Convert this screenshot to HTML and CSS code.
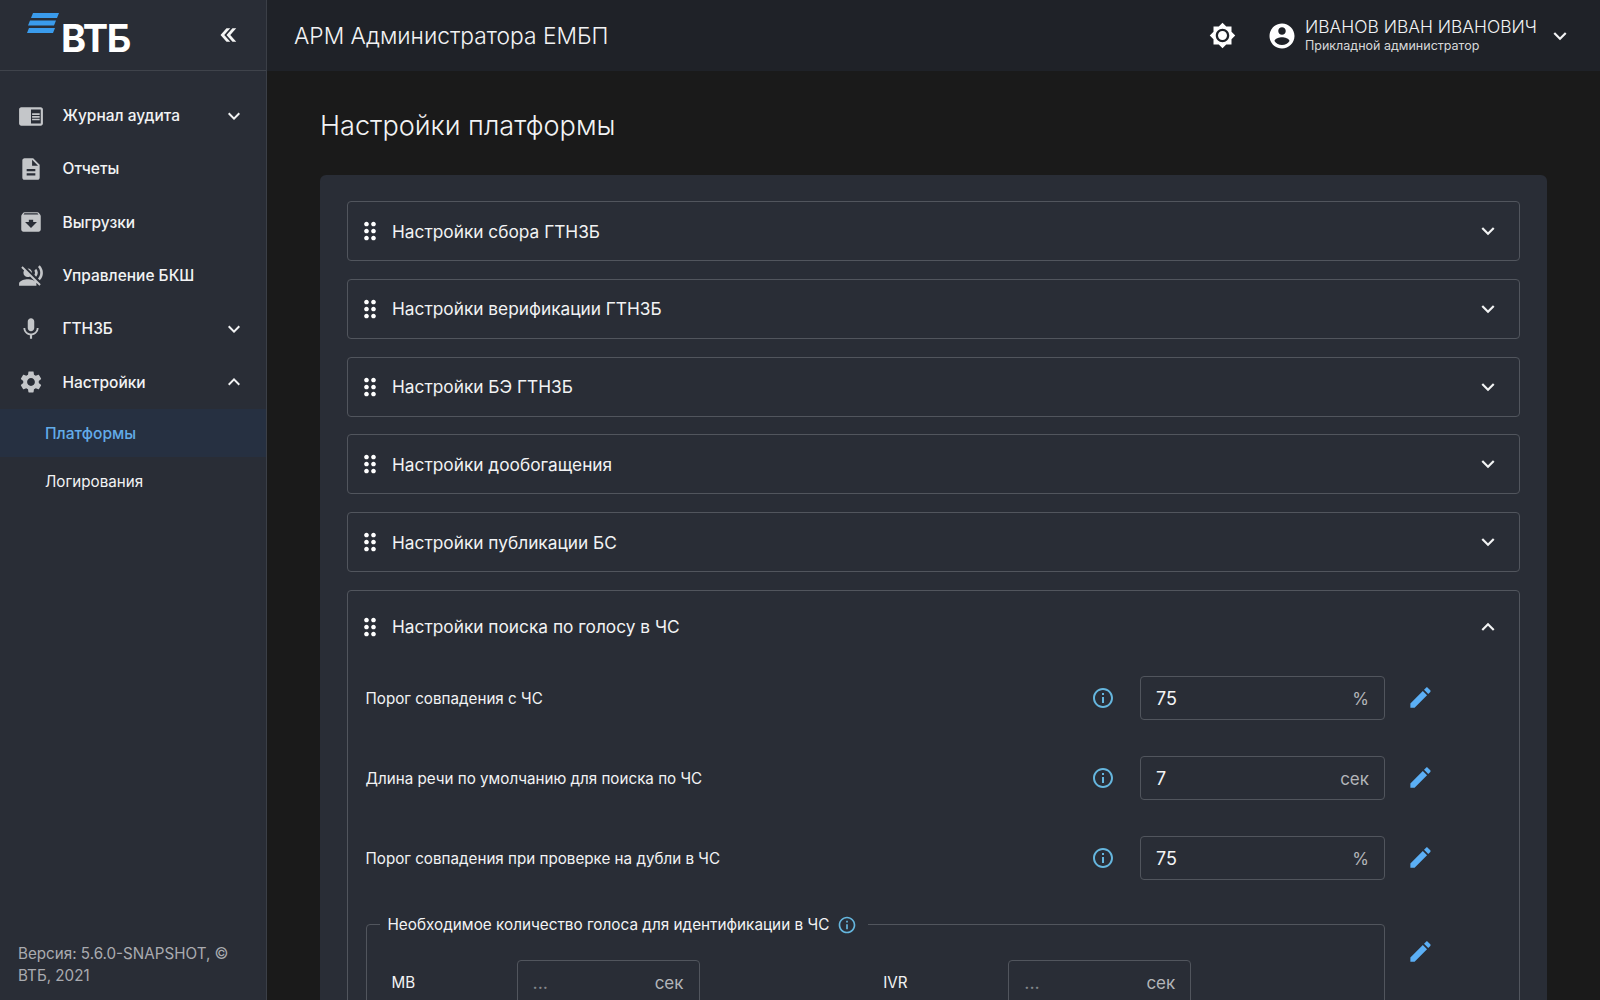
FILE: index.html
```html
<!DOCTYPE html>
<html lang="ru">
<head>
<meta charset="UTF-8">
<meta name="viewport" content="width=device-width, initial-scale=1.0">
<title>Настройки платформы</title>
<link rel="stylesheet" href="styles.css">
</head>
<body>

<svg class="sprite" xmlns="http://www.w3.org/2000/svg">
    <symbol id="i-journal" viewBox="0 0 24 24"><path d="M13 12h7v1.5h-7zm0-2.5h7V11h-7zm0 5h7V16h-7zM21 4H3c-1.1 0-2 .9-2 2v13c0 1.1.9 2 2 2h18c1.1 0 2-.9 2-2V6c0-1.1-.9-2-2-2zm0 15h-9V6h9v13z"/></symbol>
    <symbol id="i-report" viewBox="0 0 24 24"><path d="M14 2H6c-1.1 0-1.99.9-1.99 2L4 20c0 1.1.89 2 1.99 2H18c1.1 0 2-.9 2-2V8l-6-6zm2 16H8v-2h8v2zm0-4H8v-2h8v2zm-3-5V3.5L18.5 9H13z"/></symbol>
    <symbol id="i-archive" viewBox="0 0 24 24"><path d="M20.54 5.23l-1.39-1.68C18.88 3.21 18.47 3 18 3H6c-.47 0-.88.21-1.16.55L3.46 5.23C3.17 5.57 3 6.02 3 6.5V19c0 1.1.9 2 2 2h14c1.1 0 2-.9 2-2V6.5c0-.48-.17-.93-.46-1.27zM12 17.5L6.5 12H10v-2h4v2h3.5L12 17.5zM5.12 5l.81-1h12l.94 1H5.12z"/></symbol>
    <symbol id="i-voice-off" viewBox="0 0 24 24"><path d="M12.99 9.18c0-.06.01-.12.01-.18 0-2.21-1.79-4-4-4-.06 0-.12.01-.18.01l4.17 4.17zm-6.1-3.56L4.27 3 3 4.27l2.62 2.62C5.23 7.5 5 8.22 5 9c0 2.21 1.79 4 4 4 .78 0 1.5-.23 2.11-.62L19.73 21 21 19.73l-8.62-8.62-5.49-5.49zM9 15c-2.67 0-8 1.34-8 4v2h16v-2c0-2.66-5.33-4-8-4zm7.76-9.64l-1.68 1.69c.84 1.18.84 2.71 0 3.89l1.68 1.69c2.02-2.02 2.02-5.07 0-7.27zM20.07 2l-1.63 1.63c2.77 3.02 2.77 7.56 0 10.74L20.07 16c3.9-3.89 3.91-9.95 0-14z"/></symbol>
    <symbol id="i-mic" viewBox="0 0 24 24"><path d="M12 14c1.66 0 2.99-1.34 2.99-3L15 5c0-1.66-1.34-3-3-3S9 3.34 9 5v6c0 1.66 1.34 3 3 3zm5.3-3c0 3-2.54 5.1-5.3 5.1S6.7 14 6.7 11H5c0 3.41 2.72 6.23 6 6.72V21h2v-3.28c3.28-.48 6-3.3 6-6.72h-1.7z"/></symbol>
    <symbol id="i-settings" viewBox="0 0 24 24"><path d="M19.14 12.94c.04-.3.06-.61.06-.94 0-.32-.02-.64-.07-.94l2.03-1.58c.18-.14.23-.41.12-.61l-1.92-3.32c-.12-.22-.37-.29-.59-.22l-2.39.96c-.5-.38-1.03-.7-1.62-.94l-.36-2.54c-.04-.24-.24-.41-.48-.41h-3.84c-.24 0-.43.17-.47.41l-.36 2.54c-.59.24-1.13.57-1.62.94l-2.39-.96c-.22-.08-.47 0-.59.22L2.74 8.87c-.12.21-.08.47.12.61l2.03 1.58c-.05.3-.09.63-.09.94s.02.64.07.94l-2.03 1.58c-.18.14-.23.41-.12.61l1.92 3.32c.12.22.37.29.59.22l2.39-.96c.5.38 1.03.7 1.62.94l.36 2.54c.05.24.24.41.48.41h3.84c.24 0 .44-.17.47-.41l.36-2.54c.59-.24 1.13-.56 1.62-.94l2.39.96c.22.08.47 0 .59-.22l1.92-3.32c.12-.22.07-.47-.12-.61l-2.01-1.58zM12 15.6c-1.98 0-3.6-1.62-3.6-3.6s1.62-3.6 3.6-3.6 3.6 1.62 3.6 3.6-1.62 3.6-3.6 3.6z"/></symbol>
    <symbol id="i-theme" viewBox="0 0 24 24"><path d="M20 8.69V4h-4.69L12 .69 8.69 4H4v4.69L.69 12 4 15.31V20h4.69L12 23.31 15.31 20H20v-4.69L23.31 12 20 8.69zM12 18c-3.31 0-6-2.69-6-6s2.69-6 6-6 6 2.69 6 6-2.69 6-6 6zm0-10c-2.21 0-4 1.79-4 4s1.79 4 4 4 4-1.79 4-4-1.79-4-4-4z"/></symbol>
    <symbol id="i-account" viewBox="0 0 24 24"><path d="M12 2C6.48 2 2 6.48 2 12s4.48 10 10 10 10-4.48 10-10S17.52 2 12 2zm0 3c1.66 0 3 1.34 3 3s-1.34 3-3 3-3-1.34-3-3 1.34-3 3-3zm0 14.2c-2.5 0-4.71-1.28-6-3.22.03-1.99 4-3.08 6-3.08 1.99 0 5.97 1.09 6 3.08-1.29 1.94-3.5 3.22-6 3.22z"/></symbol>
    <symbol id="i-drag" viewBox="0 0 24 24"><path d="M11 18c0 1.1-.9 2-2 2s-2-.9-2-2 .9-2 2-2 2 .9 2 2zm-2-8c-1.1 0-2 .9-2 2s.9 2 2 2 2-.9 2-2-.9-2-2-2zm0-6c-1.1 0-2 .9-2 2s.9 2 2 2 2-.9 2-2-.9-2-2-2zm6 4c1.1 0 2-.9 2-2s-.9-2-2-2-2 .9-2 2 .9 2 2 2zm0 2c-1.1 0-2 .9-2 2s.9 2 2 2 2-.9 2-2-.9-2-2-2zm0 6c-1.1 0-2 .9-2 2s.9 2 2 2 2-.9 2-2-.9-2-2-2z"/></symbol>
    <symbol id="i-edit" viewBox="0 0 24 24"><path d="M3 17.25V21h3.75L17.81 9.94l-3.75-3.75L3 17.25zM20.71 7.04c.39-.39.39-1.02 0-1.41l-2.34-2.34c-.39-.39-1.02-.39-1.41 0l-1.83 1.83 3.75 3.75 1.83-1.83z"/></symbol>
    <symbol id="i-info" viewBox="0 0 24 24"><path d="M11 7h2v2h-2zm0 4h2v6h-2zm1-9C6.48 2 2 6.48 2 12s4.48 10 10 10 10-4.48 10-10S17.52 2 12 2zm0 18c-4.41 0-8-3.59-8-8s3.59-8 8-8 8 3.59 8 8-3.59 8-8 8z"/></symbol>
    <symbol id="i-down" viewBox="0 0 24 24"><path d="M16.59 8.59L12 13.17 7.41 8.59 6 10l6 6 6-6z"/></symbol>
    <symbol id="i-up" viewBox="0 0 24 24"><path d="M12 8l-6 6 1.41 1.41L12 10.83l4.59 4.58L18 14z"/></symbol>
    <symbol id="i-collapse" viewBox="0 0 24 24"><path d="M10 3L2 12l8 9h5l-8-9 8-9z"/><path d="M18 3l-8 9 8 9h5l-8-9 8-9z"/></symbol>
</svg>

<div class="app">
    <aside class="sidebar">
        <div class="logo-bar">
            <div class="logo">
                <svg class="logo-stripes" viewBox="0 0 32 20"><path d="M6 0h26l-2 5H4zM3 7.500h26l-2 5H1zM2 15h26l-2 5H0z" fill="#3a9bec"/></svg>
                <span class="logo-text">ВТБ</span>
            </div>
            <svg class="icon collapse-btn"><use href="#i-collapse"/></svg>
        </div>
        <nav class="nav">
            <a class="nav-item"><svg class="icon nav-icon"><use href="#i-journal"/></svg><span>Журнал аудита</span><svg class="icon nav-arrow"><use href="#i-down"/></svg></a>
            <a class="nav-item"><svg class="icon nav-icon"><use href="#i-report"/></svg><span>Отчеты</span></a>
            <a class="nav-item"><svg class="icon nav-icon"><use href="#i-archive"/></svg><span>Выгрузки</span></a>
            <a class="nav-item"><svg class="icon nav-icon"><use href="#i-voice-off"/></svg><span>Управление БКШ</span></a>
            <a class="nav-item"><svg class="icon nav-icon"><use href="#i-mic"/></svg><span>ГТНЗБ</span><svg class="icon nav-arrow"><use href="#i-down"/></svg></a>
            <a class="nav-item"><svg class="icon nav-icon"><use href="#i-settings"/></svg><span>Настройки</span><svg class="icon nav-arrow"><use href="#i-up"/></svg></a>
            <a class="nav-sub active">Платформы</a>
            <a class="nav-sub">Логирования</a>
        </nav>
        <div class="version">Версия: 5.6.0-SNAPSHOT, © ВТБ, 2021</div>
    </aside>

    <div class="page">
        <header class="topbar">
            <div class="app-name">АРМ Администратора ЕМБП</div>
            <svg class="icon theme-btn"><use href="#i-theme"/></svg>
            <svg class="icon account-icon"><use href="#i-account"/></svg>
            <div class="user">
                <div class="user-name">ИВАНОВ ИВАН ИВАНОВИЧ</div>
                <div class="user-role">Прикладной администратор</div>
            </div>
            <svg class="icon user-arrow"><use href="#i-down"/></svg>
        </header>

        <main class="content">
            <h1 class="title">Настройки платформы</h1>
            <section class="card">
                <div class="acc">
                    <div class="acc-head"><svg class="icon drag"><use href="#i-drag"/></svg><span>Настройки сбора ГТНЗБ</span><svg class="icon acc-arrow"><use href="#i-down"/></svg></div>
                </div>
                <div class="acc">
                    <div class="acc-head"><svg class="icon drag"><use href="#i-drag"/></svg><span>Настройки верификации ГТНЗБ</span><svg class="icon acc-arrow"><use href="#i-down"/></svg></div>
                </div>
                <div class="acc">
                    <div class="acc-head"><svg class="icon drag"><use href="#i-drag"/></svg><span>Настройки БЭ ГТНЗБ</span><svg class="icon acc-arrow"><use href="#i-down"/></svg></div>
                </div>
                <div class="acc">
                    <div class="acc-head"><svg class="icon drag"><use href="#i-drag"/></svg><span>Настройки дообогащения</span><svg class="icon acc-arrow"><use href="#i-down"/></svg></div>
                </div>
                <div class="acc">
                    <div class="acc-head"><svg class="icon drag"><use href="#i-drag"/></svg><span>Настройки публикации БС</span><svg class="icon acc-arrow"><use href="#i-down"/></svg></div>
                </div>
                <div class="acc open">
                    <div class="acc-head"><svg class="icon drag"><use href="#i-drag"/></svg><span>Настройки поиска по голосу в ЧС</span><svg class="icon acc-arrow"><use href="#i-up"/></svg></div>
                    <div class="acc-body">
                        <div class="row">
                            <div class="row-label">Порог совпадения с ЧС</div>
                            <svg class="icon info"><use href="#i-info"/></svg>
                            <div class="field"><span class="value">75</span><span class="unit">%</span></div>
                            <svg class="icon edit"><use href="#i-edit"/></svg>
                        </div>
                        <div class="row">
                            <div class="row-label">Длина речи по умолчанию для поиска по ЧС</div>
                            <svg class="icon info"><use href="#i-info"/></svg>
                            <div class="field"><span class="value">7</span><span class="unit">сек</span></div>
                            <svg class="icon edit"><use href="#i-edit"/></svg>
                        </div>
                        <div class="row">
                            <div class="row-label">Порог совпадения при проверке на дубли в ЧС</div>
                            <svg class="icon info"><use href="#i-info"/></svg>
                            <div class="field"><span class="value">75</span><span class="unit">%</span></div>
                            <svg class="icon edit"><use href="#i-edit"/></svg>
                        </div>
                        <div class="row row-group">
                            <fieldset class="group">
                                <legend class="group-title">Необходимое количество голоса для идентификации в ЧС<svg class="icon info-small"><use href="#i-info"/></svg></legend>
                                <div class="group-cols">
                                    <div class="group-item">
                                        <div class="group-label">МВ</div>
                                        <div class="field field-small"><span class="placeholder">...</span><span class="unit">сек</span></div>
                                    </div>
                                    <div class="group-item">
                                        <div class="group-label">IVR</div>
                                        <div class="field field-small"><span class="placeholder">...</span><span class="unit">сек</span></div>
                                    </div>
                                </div>
                            </fieldset>
                            <svg class="icon edit edit-group"><use href="#i-edit"/></svg>
                        </div>
                    </div>
                </div>
            </section>
        </main>
    </div>
</div>

</body>
</html>
```

FILE: styles.css
```css
html, body {
    margin: 0;
    padding: 0;
    height: 100%;
    overflow: hidden;
}

body {
    font-family: Inter, "Noto Sans", sans-serif;
    background-color: #1a1a1a;
    color: #f2f3f4;
}

.sprite {
    display: none;
}

.icon {
    display: block;
    width: 24px;
    height: 24px;
    flex: none;
    fill: currentColor;
}

.app {
    display: flex;
    height: 1000px;
}

/* sidebar */
.sidebar {
    width: 266px;
    flex: none;
    display: flex;
    flex-direction: column;
    background-color: #292d36;
    border-right: 1px solid #3b3f47;
}

.logo-bar {
    height: 71px;
    box-sizing: border-box;
    display: flex;
    align-items: center;
    justify-content: space-between;
    padding: 0 29px 0 27px;
    border-bottom: 1px solid #3f434b;
}

.logo {
    display: flex;
    align-items: flex-start;
    height: 40px;
}

.logo-stripes {
    width: 32px;
    height: 20px;
    flex: none;
    margin-top: -2px;
}

.logo-text {
    margin: -1px 0 0 2px;
    font-size: 38px;
    line-height: 48px;
    font-weight: 700;
    letter-spacing: -1.300px;
    color: #fff;
}

.collapse-btn {
    width: 18px;
    height: 18px;
    color: #f5f5f5;
}

.nav {
    flex: 1;
    padding-top: 18px;
}

.nav-item {
    height: 53.3px;
    display: flex;
    align-items: center;
    padding: 0 20px 0 18px;
    font-size: 15.500px;
    font-weight: 500;
}

.nav-item span {
    flex: 1;
    margin-left: 18.500px;
}

.nav-icon {
    width: 26px;
    height: 26px;
    color: #c4c6c9;
}

.nav-arrow {
    color: #f2f3f4;
}

.nav-sub {
    display: flex;
    align-items: center;
    height: 48.500px;
    padding-left: 45px;
    font-size: 15.200px;
}

.nav-sub.active {
    background-color: #263041;
    color: #62abe8;
    font-size: 15.600px;
    font-weight: 500;
}

.version {
    padding: 0 18px 13px;
    font-size: 15.200px;
    line-height: 22px;
    color: #a9abb0;
}

/* top bar */
.page {
    flex: 1;
    min-width: 0;
    display: flex;
    flex-direction: column;
}

.topbar {
    height: 71px;
    flex: none;
    display: flex;
    align-items: center;
    padding: 0 27px 0 27px;
    background-color: #1f2228;
}

.app-name {
    flex: 1;
    font-size: 22.800px;
    font-weight: 300;
    color: #f2f3f4;
}

.theme-btn {
    width: 27px;
    height: 27px;
    color: #fff;
}

.account-icon {
    width: 30px;
    height: 30px;
    margin-left: 31px;
    color: #fff;
}

.user {
    margin: 0 0 2px 8px;
    width: 233px;
}

.user-name {
    font-size: 17.450px;
    font-weight: 300;
    line-height: 22px;
    color: #f2f3f4;
}

.user-role {
    font-size: 12.500px;
    line-height: 16px;
    color: #d8d9da;
}

.user-arrow {
    width: 26px;
    height: 26px;
    margin-left: 9px;
}

/* content */
.content {
    flex: 1;
    min-height: 0;
    padding: 0 53px;
    overflow: hidden;
}

.title {
    margin: 0;
    padding-top: 38px;
    height: 66px;
    font-size: 27.100px;
    line-height: 34px;
    font-weight: 300;
    color: #f2f3f4;
}

.card {
    box-sizing: border-box;
    min-height: 900px;
    padding: 26px 27px;
    background-color: #292d36;
    border-radius: 6px;
    display: flex;
    flex-direction: column;
    gap: 17.750px;
}

.acc {
    border: 1px solid #51555d;
    border-radius: 4px;
}

.acc-head {
    height: 58px;
    display: flex;
    align-items: center;
    padding: 0 18px 0 8px;
    font-size: 17.300px;
}

.acc-head span {
    flex: 1;
    margin-left: 8px;
}

.open .acc-head {
    height: 72px;
}

.drag {
    width: 28px;
    height: 28px;
    color: #fff;
}

.acc-arrow {
    width: 26px;
    height: 26px;
}

.acc-body {
    padding: 13px 85px 0 17.500px;
}

.row {
    display: flex;
    align-items: center;
    margin-bottom: 36px;
}

.row-label {
    flex: 1;
    padding-top: 2px;
    font-size: 15.200px;
}

.info {
    color: #65b6de;
    margin-right: 25px;
}

.field {
    box-sizing: border-box;
    width: 245px;
    height: 44px;
    flex: none;
    display: flex;
    align-items: center;
    justify-content: space-between;
    padding: 2px 15px 0;
    border: 1px solid #51555d;
    border-radius: 4px;
    font-size: 18px;
}

.unit {
    font-size: 17px;
    color: #b3b5b9;
}

.placeholder {
    color: #85888d;
}

.edit {
    width: 27px;
    height: 27px;
    margin-left: 22px;
    color: #5baff5;
}

.row-group {
    align-items: flex-start;
    margin-top: -1px;
}

.edit-group {
    margin-top: 23px;
}

.group {
    flex: 1;
    min-width: 0;
    margin: 0;
    padding: 25px 25px 30px;
    border: 1px solid #51555d;
    border-radius: 4px;
}

.group-title {
    display: flex;
    align-items: center;
    gap: 8px;
    margin-left: -12px;
    padding: 0 8px;
    font-size: 15.300px;
}

.info-small {
    width: 20px;
    height: 20px;
    margin-right: 3px;
    color: #65b6de;
}

.group-cols {
    display: flex;
}

.group-item {
    display: flex;
    align-items: center;
    width: 492px;
}

.group-item:first-child {
    width: 493px;
}

.group-item + .group-item {
    margin-left: 15px;
}

.group-label {
    width: 125px;
    padding-top: 2px;
    font-size: 15.200px;
}

.field-small {
    width: 183px;
}
```
